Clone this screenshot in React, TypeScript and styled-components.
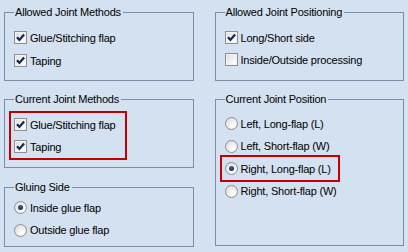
import React from 'react'
import styled, { createGlobalStyle } from 'styled-components'

const Colors = {
  page: '#d4e1f0',
  frame: '#7a8ea8',
  text: '#000000',
  mark: '#17294f',
  highlight: '#c00000',
}

const GlobalStyle = createGlobalStyle`
  html, body {
    margin: 0;
    padding: 0;
    background: ${Colors.page};
  }
  body {
    font-family: "Liberation Sans", Arial, sans-serif;
    font-size: 11px;
    letter-spacing: -0.2px;
    color: ${Colors.text};
  }
`

const CheckMark = () => (
  <svg width="9" height="9" viewBox="0 0 9 9">
    <path d="M1 4.3 L3.4 6.9 L8.1 1.5" fill="none" stroke={Colors.mark} strokeWidth="2.3" />
  </svg>
)

const CheckOption = ({ label, checked }: { label: string; checked?: boolean }) => (
  <Option>
    <CheckBox>{checked && <CheckMark />}</CheckBox>
    <span>{label}</span>
  </Option>
)

const RadioOption = ({ label, checked }: { label: string; checked?: boolean }) => (
  <Option>
    <RadioCircle>{checked && <RadioDot />}</RadioCircle>
    <span>{label}</span>
  </Option>
)

export default function App() {
  return (
    <>
      <GlobalStyle />
      <Page>
        <Column>
          <Group $height={75}>
            <Title>Allowed Joint Methods</Title>
            <Options $top={10} $gap={6}>
              <CheckOption label="Glue/Stitching flap" checked />
              <CheckOption label="Taping" checked />
            </Options>
          </Group>
          <Group $height={75}>
            <Title>Current Joint Methods</Title>
            <Options $top={10} $gap={6}>
              <Highlight $width={109} $gap={5}>
                <CheckOption label="Glue/Stitching flap" checked />
                <CheckOption label="Taping" checked />
              </Highlight>
            </Options>
          </Group>
          <Group $height={66} $offset={1}>
            <Title>Gluing Side</Title>
            <Options $top={5} $gap={5.5}>
              <RadioOption label="Inside glue flap" checked />
              <RadioOption label="Outside glue flap" />
            </Options>
          </Group>
        </Column>
        <Column>
          <Group $height={75}>
            <Title>Allowed Joint Positioning</Title>
            <Options $top={10} $gap={5}>
              <CheckOption label="Long/Short side" checked />
              <CheckOption label="Inside/Outside processing" />
            </Options>
          </Group>
          <Group $height={153}>
            <Title>Current Joint Position</Title>
            <Options $top={9} $gap={5.5}>
              <RadioOption label="Left, Long-flap (L)" />
              <RadioOption label="Left, Short-flap (W)" />
              <Highlight $width={111} $gap={0}>
                <RadioOption label="Right, Long-flap (L)" checked />
              </Highlight>
              <RadioOption label="Right, Short-flap (W)" />
            </Options>
          </Group>
        </Column>
      </Page>
    </>
  )
}

const Page = styled.div`
  display: flex;
  gap: 21px;
  padding: 6px 4px 0 4px;
`

const Column = styled.div`
  display: flex;
  flex-direction: column;
  gap: 12px;
  width: 190px;
`

const Group = styled.fieldset<{ $height: number; $offset?: number }>`
  box-sizing: border-box;
  height: ${p => p.$height}px;
  margin: ${p => p.$offset || 0}px 0 0 0;
  padding: 0 8px 0 9px;
  min-width: 0;
  border: 1px solid ${Colors.frame};
`

const Title = styled.legend`
  padding: 0 2px 0 1px;
  line-height: 13px;
`

const Options = styled.div<{ $top: number; $gap: number }>`
  display: flex;
  flex-direction: column;
  align-items: flex-start;
  gap: ${p => p.$gap}px;
  margin-top: ${p => p.$top}px;
`

const Option = styled.label`
  display: flex;
  align-items: center;
  gap: 3px;
  height: 17px;
  white-space: nowrap;
`

const CheckBox = styled.span`
  box-sizing: border-box;
  display: flex;
  align-items: center;
  justify-content: center;
  width: 13px;
  height: 13px;
  border: 1px solid #8e8f8f;
  background: linear-gradient(135deg, #dcdcdc 0%, #f4f4f4 60%, #ffffff 100%);
  box-shadow: inset 0 0 0 1px #f2f2f2;
`

const RadioCircle = styled.span`
  box-sizing: border-box;
  display: flex;
  align-items: center;
  justify-content: center;
  width: 13px;
  height: 13px;
  border-radius: 50%;
  border: 1px solid #8e8f8f;
  background: radial-gradient(circle at 65% 70%, #ffffff 0%, #eeeeee 45%, #d6d6d6 100%);
`

const RadioDot = styled.span`
  width: 5px;
  height: 5px;
  border-radius: 50%;
  background: radial-gradient(circle at 40% 35%, #4a5f86 0%, #0e1a33 100%);
`

const Highlight = styled.div<{ $width: number; $gap: number }>`
  display: flex;
  flex-direction: column;
  gap: ${p => p.$gap}px;
  width: ${p => p.$width}px;
  margin: -5px -4px -5px -5px;
  padding: 3px 2px 3px 3px;
  border: 2px solid ${Colors.highlight};
`
